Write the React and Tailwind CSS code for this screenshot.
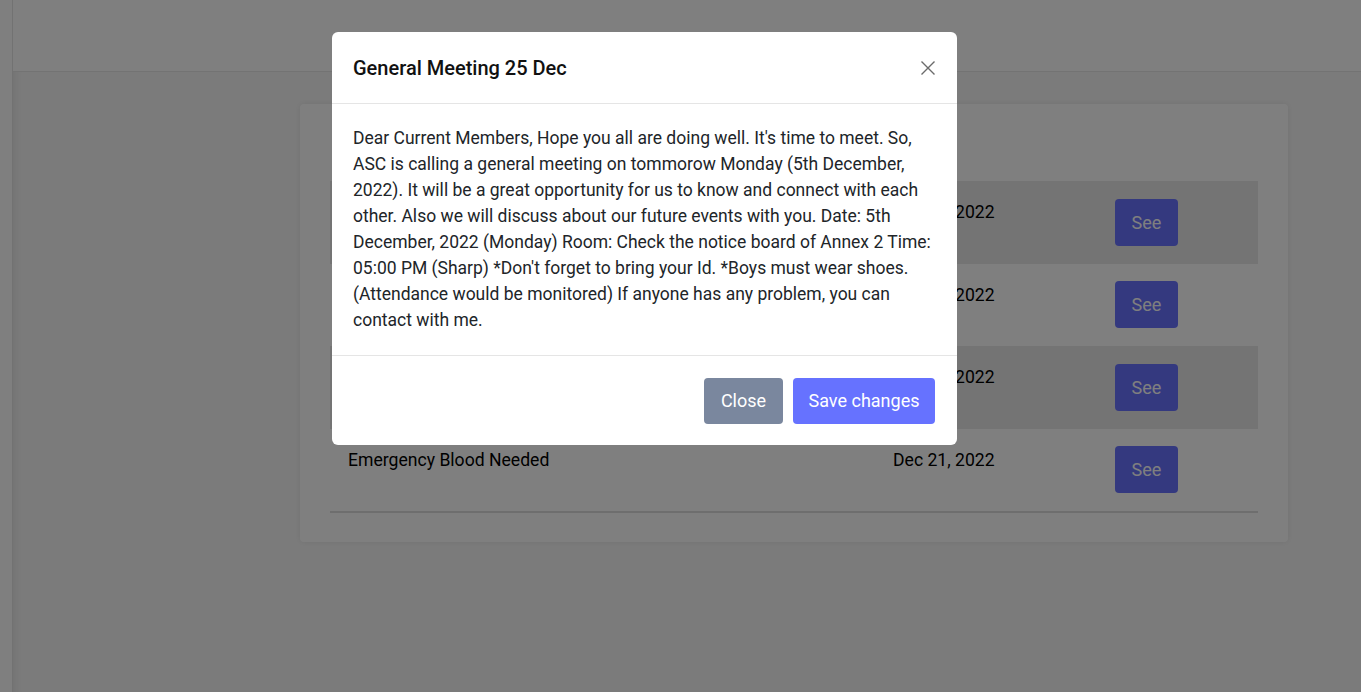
import React from "react";

const rows = [
  { title: "General Meeting 25 Dec", date: "Dec 25, 2022", striped: true },
  { title: "Workshop on Web Development", date: "Dec 23, 2022", striped: false },
  { title: "Programming Contest Result", date: "Dec 22, 2022", striped: true },
  { title: "Emergency Blood Needed", date: "Dec 21, 2022", striped: false },
];

export default function App() {
  return (
    <div
      className="relative w-[1361px] h-[692px] overflow-hidden bg-[#f7f7f7] text-black"
      style={{ fontFamily: "Roboto, 'Liberation Sans', sans-serif" }}
    >
      <div className="flex h-full">
        <aside className="w-[13px] h-full bg-white border-r border-[#e4e4e4] shrink-0" />
        <main className="flex-1 flex flex-col">
          <header className="h-[72px] bg-white border-b border-[#e6e6e6] shrink-0" />
          <div className="flex-1 pt-[32px] pl-[287px] shadow-[inset_10px_0_10px_-8px_rgba(0,0,0,0.08)]">
            <section className="w-[988px] h-[438px] bg-white rounded-[4px] shadow-[0_0_6px_rgba(0,0,0,0.08)] px-[30px]">
              <div className="h-[77px] flex items-center pl-[18px] text-[20px] font-medium">
                Notices
              </div>
              <div className="border-b-2 border-[#dcdcdc]">
                {rows.map((r) => (
                  <div
                    key={r.title}
                    className={`grid grid-cols-[545px_222px_1fr] h-[82.6px] ${r.striped ? "bg-[#e8e8e8]" : ""}`}
                  >
                    <div className="pl-[18px] pt-[18px] text-[17.6px] leading-[26px]">{r.title}</div>
                    <div className="pl-[18px] pt-[18px] text-[17.6px] leading-[26px]">{r.date}</div>
                    <div className="pl-[18px] pt-[17.5px]">
                      <button className="w-[63px] h-[47px] rounded-[4px] bg-[#6872ff] text-white text-[18px]">
                        See
                      </button>
                    </div>
                  </div>
                ))}
              </div>
            </section>
          </div>
        </main>
      </div>

      {/* backdrop */}
      <div className="absolute inset-0 bg-black/50" />

      {/* modal */}
      <div className="absolute left-[332px] top-[32px] w-[625px] bg-white rounded-[6px] flex flex-col">
        <div className="h-[72px] flex items-center justify-between pl-[21px] pr-[21px] border-b border-[#e5e5e5]">
          <h5 className="text-[20px] font-medium text-[#111] leading-none">General Meeting 25 Dec</h5>
          <button className="w-[16px] h-[16px] flex items-center justify-center">
            <svg width="16" height="16" viewBox="0 0 16 16">
              <path d="M1.5 1.5 L14.5 14.5 M14.5 1.5 L1.5 14.5" stroke="#6b6b6b" strokeWidth="1.4" fill="none" />
            </svg>
          </button>
        </div>
        <div className="px-[21px] pt-[21px] pb-[22px] text-[17.5px] leading-[26px] text-[#212529] border-b border-[#e5e5e5]">
          Dear Current Members, Hope you all are doing well. It's time to meet. So, ASC is calling a general
          meeting on tommorow Monday (5th December, 2022). It will be a great opportunity for us to know and
          connect with each other. Also we will discuss about our future events with you. Date: 5th December,
          2022 (Monday) Room: Check the notice board of Annex 2 Time: 05:00 PM (Sharp) *Don't forget to bring
          your Id. *Boys must wear shoes. (Attendance would be monitored) If anyone has any problem, you can
          contact with me.
        </div>
        <div className="h-[89px] flex items-center justify-end gap-[10px] pr-[22px]">
          <button className="w-[79px] h-[46px] rounded-[4px] bg-[#7a879e] text-white text-[18px]">Close</button>
          <button className="w-[142px] h-[46px] rounded-[4px] bg-[#6672ff] text-white text-[18px]">
            Save changes
          </button>
        </div>
      </div>
    </div>
  );
}
